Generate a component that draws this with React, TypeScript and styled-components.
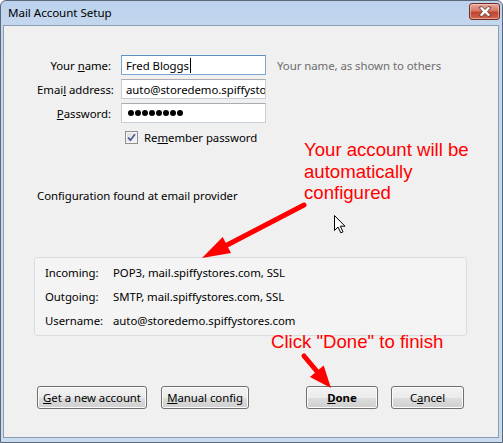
import React from 'react';
import styled, { createGlobalStyle } from 'styled-components';

const GlobalStyle = createGlobalStyle`
  html, body {
    margin: 0;
    padding: 0;
    background: #ffffff;
  }
  * {
    box-sizing: border-box;
  }
`;

const uiFont = `"Noto Sans", "Open Sans", sans-serif`;

const Window = styled.div`
  width: 503px;
  height: 443px;
  display: flex;
  flex-direction: column;
  padding: 0 3px 4px 2px;
  border: 1px solid #5a6878;
  border-radius: 6px 6px 0 0;
  background: linear-gradient(180deg, #bcd2ec 0px, #c3d7ee 24px, #c9dbef 100%);
  font-family: ${uiFont};
  font-size: 11.4px;
  letter-spacing: -0.05px;
  color: #000;
  overflow: hidden;
`;

const TitleBar = styled.div`
  height: 24px;
  display: flex;
  align-items: center;
  justify-content: space-between;
  padding: 0 0 2px 5px;
  flex-shrink: 0;
`;

const Title = styled.span`
  font-size: 11.6px;
  color: #000;
`;

const CloseButton = styled.div`
  width: 31px;
  height: 17px;
  margin-top: -1px;
  margin-right: -1px;
  border: 1px solid #6e2c26;
  border-radius: 3px;
  background: linear-gradient(180deg, #e9a99b 0%, #d47868 45%, #c2432f 55%, #d0664e 100%);
  box-shadow: inset 0 0 0 1px rgba(255, 220, 210, 0.5);
  display: flex;
  align-items: center;
  justify-content: center;
`;

const Content = styled.div`
  position: relative;
  flex: 1;
  background: #f0f0f0;
  border: 1px solid #8a9db3;
  padding: 29px 34px 0 33px;
  display: flex;
  flex-direction: column;
`;

const FormGrid = styled.div`
  display: grid;
  grid-template-columns: 74px 145px auto;
  grid-auto-rows: 20px;
  column-gap: 10px;
  row-gap: 4px;
  align-items: center;
`;

const Label = styled.label`
  text-align: right;
  white-space: nowrap;
`;

const TextBox = styled.div<{ $focused?: boolean }>`
  height: 20px;
  display: flex;
  align-items: center;
  padding: 0 4px;
  background: #fff;
  border: 1px solid ${(p) => (p.$focused ? '#7aa7d6' : '#c5cfd9')};
  border-top-color: ${(p) => (p.$focused ? '#5d8fc4' : '#abadb3')};
  white-space: nowrap;
  overflow: hidden;
`;

const Caret = styled.span`
  display: inline-block;
  width: 1px;
  height: 15px;
  background: #000;
  margin-left: 1px;
`;

const Hint = styled.span`
  color: #6d6d6d;
  white-space: nowrap;
  padding-left: 1px;
`;

const Dots = styled.div`
  display: flex;
  gap: 1px;
  padding-left: 2px;
`;

const Dot = styled.span`
  width: 6px;
  height: 6px;
  border-radius: 50%;
  background: #000;
`;

const CheckRow = styled.div`
  display: flex;
  align-items: center;
  gap: 6px;
  margin: 8px 0 0 88px;
  height: 13px;
`;

const CheckBox = styled.span`
  width: 13px;
  height: 13px;
  border: 1px solid #8f8f8f;
  background: linear-gradient(135deg, #dcdcdc 0%, #f6f6f6 100%);
  box-shadow: inset 0 0 0 1px #f4f4f4;
  display: flex;
  align-items: center;
  justify-content: center;
`;

const StatusText = styled.div`
  margin-top: 44px;
  line-height: 16px;
`;

const InfoBox = styled.div`
  margin: 53px -3px 0 -3px;
  padding: 2px 10px 3px 10px;
  border: 1px solid #d9dde2;
  border-radius: 3px;
  background: #f4f4f4;
  display: grid;
  grid-template-columns: 68px auto;
  grid-auto-rows: 24px;
  align-items: center;
`;

const InfoLabel = styled.span`
  white-space: nowrap;
`;

const InfoValue = styled.span`
  white-space: nowrap;
`;

const ButtonBar = styled.div`
  margin-top: 50px;
  display: flex;
  justify-content: space-between;
`;

const ButtonGroup = styled.div<{ $gap: number }>`
  display: flex;
  gap: ${(p) => p.$gap}px;
`;

const Button = styled.button<{ $width: number; $bold?: boolean }>`
  width: ${(p) => p.$width}px;
  height: 23px;
  padding: 0;
  font-family: ${uiFont};
  font-size: 11.4px;
  letter-spacing: -0.05px;
  font-weight: ${(p) => (p.$bold ? 700 : 400)};
  color: #000;
  border: 1px solid #707070;
  border-radius: 3px;
  background: linear-gradient(180deg, #f2f2f2 0%, #ebebeb 50%, #dddddd 51%, #cfcfcf 100%);
  box-shadow: inset 0 0 0 1px #fcfcfc;
  display: flex;
  align-items: center;
  justify-content: center;
  line-height: 1;
`;

const Note = styled.div<{ $left: number; $top: number }>`
  position: absolute;
  left: ${(p) => p.$left}px;
  top: ${(p) => p.$top}px;
  font-family: "Liberation Sans", Arial, sans-serif;
  font-size: 18.6px;
  line-height: 21.5px;
  letter-spacing: 0;
  color: #ff0000;
  white-space: nowrap;
`;

const Overlay = styled.svg`
  position: absolute;
  left: 0;
  top: 0;
  pointer-events: none;
`;

const CloseGlyph = () => (
  <svg width="14" height="11" viewBox="0 0 14 11">
    <path
      d="M1 1.5 L4 0.5 L7 3.5 L10 0.5 L13 1.5 L9.5 5.5 L13 9.5 L10 10.5 L7 7.5 L4 10.5 L1 9.5 L4.5 5.5 Z"
      fill="#ffffff"
      stroke="#5a3530"
      strokeWidth="0.9"
      strokeLinejoin="round"
    />
  </svg>
);

const CheckMark = () => (
  <svg width="9" height="9" viewBox="0 0 9 9">
    <path d="M1 4.5 L3.4 7.2 L8 1.2" fill="none" stroke="#4b5f96" strokeWidth="1.8" />
  </svg>
);

// arrow drawn in page coordinates, tail -> tip
const RedArrow = ({ x1, y1, x2, y2, head = 28, half = 9 }: {
  x1: number; y1: number; x2: number; y2: number; head?: number; half?: number;
}) => {
  const dx = x2 - x1;
  const dy = y2 - y1;
  const len = Math.hypot(dx, dy);
  const ux = dx / len;
  const uy = dy / len;
  const bx = x2 - ux * head;
  const by = y2 - uy * head;
  const px = -uy;
  const py = ux;
  const wings = `${bx + px * half},${by + py * half} ${x2},${y2} ${bx - px * half},${by - py * half}`;
  return (
    <g>
      <line x1={x1} y1={y1} x2={bx + ux * 4} y2={by + uy * 4} stroke="#ff0000" strokeWidth="5" strokeLinecap="round" />
      <polygon points={wings} fill="#ff0000" />
    </g>
  );
};

const Pointer = ({ x, y }: { x: number; y: number }) => (
  <path
    transform={`translate(${x} ${y})`}
    d="M0.5 0.5 L0.5 15.5 L4 12 L6.8 17.8 L9 16.8 L6.3 11.2 L11 11.2 Z"
    fill="#ffffff"
    stroke="#000000"
    strokeWidth="1"
    strokeLinejoin="miter"
  />
);

export default function App() {
  return (
    <>
      <GlobalStyle />
      <Window>
        <TitleBar>
          <Title>Mail Account Setup</Title>
          <CloseButton>
            <CloseGlyph />
          </CloseButton>
        </TitleBar>

        <Content>
          <FormGrid>
            <Label>Your <u>n</u>ame:</Label>
            <TextBox $focused>
              Fred Bloggs<Caret />
            </TextBox>
            <Hint>Your name, as shown to others</Hint>

            <Label>Emai<u>l</u> address:</Label>
            <TextBox>auto@storedemo.spiffystores.com</TextBox>
            <span />

            <Label><u>P</u>assword:</Label>
            <TextBox>
              <Dots>
                {Array.from({ length: 8 }).map((_, i) => (
                  <Dot key={i} />
                ))}
              </Dots>
            </TextBox>
            <span />
          </FormGrid>

          <CheckRow>
            <CheckBox>
              <CheckMark />
            </CheckBox>
            <span>Re<u>m</u>ember password</span>
          </CheckRow>

          <StatusText>Configuration found at email provider</StatusText>

          <InfoBox>
            <InfoLabel>Incoming:</InfoLabel>
            <InfoValue>POP3, mail.spiffystores.com, SSL</InfoValue>
            <InfoLabel>Outgoing:</InfoLabel>
            <InfoValue>SMTP, mail.spiffystores.com, SSL</InfoValue>
            <InfoLabel>Username:</InfoLabel>
            <InfoValue>auto@storedemo.spiffystores.com</InfoValue>
          </InfoBox>

          <ButtonBar>
            <ButtonGroup $gap={14}>
              <Button $width={110}><u>G</u>et a new account</Button>
              <Button $width={88}><u>M</u>anual config</Button>
            </ButtonGroup>
            <ButtonGroup $gap={13}>
              <Button $width={72} $bold><u>D</u>one</Button>
              <Button $width={73}>C<u>a</u>ncel</Button>
            </ButtonGroup>
          </ButtonBar>

          <Note $left={300} $top={113}>
            Your account will be<br />automatically<br />configured
          </Note>
          <Note $left={267} $top={305}>Click "Done" to finish</Note>

          <Overlay width="496" height="413" viewBox="3 25 496 413">
            <RedArrow x1={303} y1={204} x2={201} y2={257} />
            <RedArrow x1={303} y1={355} x2={330} y2={387} head={22} half={9} />
            <Pointer x={333} y={214} />
          </Overlay>
        </Content>
      </Window>
    </>
  );
}
